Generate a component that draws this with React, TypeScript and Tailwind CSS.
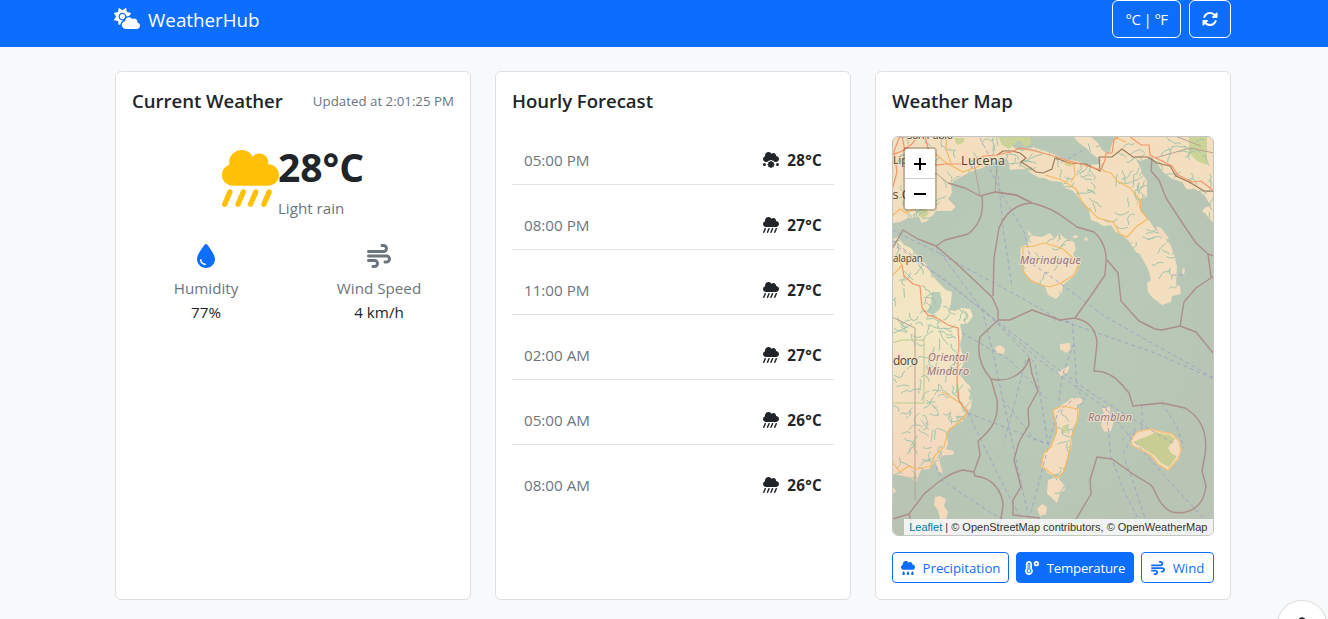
import React from "react";
import {
  FaCloudSun,
  FaRotate,
  FaCloudShowersHeavy,
  FaDroplet,
  FaWind,
  FaCloudMeatball,
  FaCloudRain,
  FaTemperatureHigh,
} from "react-icons/fa6";

const HOURS = [
  { time: "05:00 PM", temp: "28°C", meatball: true },
  { time: "08:00 PM", temp: "27°C", meatball: false },
  { time: "11:00 PM", temp: "27°C", meatball: false },
  { time: "02:00 AM", temp: "27°C", meatball: false },
  { time: "05:00 AM", temp: "26°C", meatball: false },
  { time: "08:00 AM", temp: "26°C", meatball: false },
];

const LUZON =
  "M892 136H1003L1008 143L1016 149L1023 151L1033 147L1045 151L1056 155L1064 159L1076 161L1090 165L1099 164L1101 160L1092 154L1087 149L1078 142L1073 136H1090L1098 143L1102 150L1109 154L1112 144L1117 136H1214V224L1209 219L1206 214L1202 211L1206 207L1211 206L1205 196L1195 189L1187 190L1182 182L1172 179L1162 171L1157 163L1151 157L1141 161L1136 159L1140 167L1142 173L1147 181L1147 197L1140 199L1139 208L1148 219L1155 229L1162 236L1170 244L1175 257L1177 267L1176 284L1180 286L1181 294L1172 296L1171 302L1162 305L1153 298L1148 292L1147 283L1151 280L1148 269L1142 258L1136 252L1128 240L1123 236L1115 231L1111 225L1103 226L1097 222L1091 220L1089 211L1085 204L1080 199L1073 191L1065 188L1062 182L1050 181L1045 178L1040 178L1034 175L1026 170L1018 169L1010 170L1008 160L1003 157L994 162L982 168L970 172L957 179L951 184L952 193L948 199L956 207L951 211L936 211L933 215L927 221L922 223L918 217L908 218L900 222L892 223Z";
const MINDORO =
  "M892 240L898 237L904 245L911 248L919 258L926 264L931 274L937 281L946 290L952 292L951 303L949 310L955 311L962 308L970 309L973 316L967 324L960 324L962 335L960 345L962 352L964 362L959 374L965 381L970 386L972 398L971 407L968 413L963 421L956 425L949 429L947 436L948 444L946 449L954 451L953 455L945 455L939 459L941 467L943 473L939 472L935 461L929 469L921 470L916 482L909 477L892 474Z";
const MARINDUQUE =
  "M1028 230L1033 236L1042 237L1050 233L1054 238L1059 233L1066 239L1074 242L1076 249L1073 254L1080 265L1075 275L1063 285L1062 293L1056 299L1048 295L1045 286L1033 281L1025 274L1022 262L1020 258L1021 247L1028 244L1029 238Z";
const TABLAS =
  "M1053 411L1060 406L1070 400L1075 398L1082 399V403L1076 405L1079 410L1078 418L1072 430L1072 444L1068 457L1064 470L1059 479L1064 485L1065 490L1060 493L1057 503L1051 497L1047 494L1048 480L1056 477L1047 473L1041 466L1042 456L1050 447L1056 434L1057 423Z";
const SIBUYAN =
  "M1131 440L1137 432L1150 429L1162 432L1172 434L1179 441L1181 450L1178 459L1168 470L1158 464L1151 455L1141 450L1132 445Z";

const MINOR_ISLANDS = [
  "M1102 420L1104 413L1102 408L1110 407L1110 416L1114 421L1111 431L1105 432L1101 426Z",
  "M995 347L1000 345L1005 349L1004 354L997 353Z",
  "M1060 344L1070 343L1070 350L1066 353L1060 349Z",
  "M1057 373L1063 369L1070 366L1067 373L1060 376Z",
  "M1066 403L1071 398L1080 398L1082 402L1074 405L1067 407Z",
  "M935 497L940 496L946 499L944 506L948 512L946 519L940 519L938 510L934 505Z",
  "M1037 509L1042 504L1047 507L1046 514L1040 516Z",
  "M892 486L896 491L892 495Z",
  "M1156 226L1161 228L1169 238L1166 240L1158 232Z",
  "M1073 236L1077 235L1078 238L1073 238Z",
  "M1085 237L1088 238L1087 241L1084 240Z",
  "M1183 268L1185 269L1184 275L1182 273Z",
];

const BOUNDARIES = [
  "M948 183L965 188L980 196L995 192L1016 195L1032 203C1045 206 1057 212 1066 219L1077 227L1094 232C1103 240 1107 252 1106 262L1105 275L1090 297L1075 318L1060 320L1032 310L1010 320L998 320",
  "M995 192L1016 195L1030 202",
  "M982 196C984 212 980 225 968 234L953 238L945 240L936 246L918 239L903 230L892 249",
  "M936 246L957 264L992 297L998 310",
  "M1032 203C1016 204 1005 213 999 228L994 258L993 296",
  "M998 310V320L980 337C976 356 983 370 991 379C1008 383 1025 374 1029 358L1032 374L1038 391L1028 409L1029 425L1019 442L1014 460L1021 487L1013 500V515L1040 518",
  "M991 379L997 400C999 420 991 430 978 441L980 455L974 472L963 470C948 473 936 484 924 494L909 514L892 519",
  "M974 472L975 476C993 477 1003 493 1003 506L998 536M909 514L915 536",
  "M1107 260L1118 273L1121 301L1139 321L1155 329L1162 330L1180 326L1184 302L1196 288L1211 278L1214 276",
  "M1075 318C1087 321 1096 327 1097 343L1094 371C1113 371 1121 384 1129 393L1133 406L1162 403L1185 408C1202 418 1208 434 1205 455L1202 471L1206 486C1204 508 1188 515 1172 512C1158 506 1156 490 1151 485L1133 474L1112 459L1097 457L1090 480L1091 494L1075 521",
  "M1152 158L1151 171L1159 180L1166 198L1183 224L1196 243L1208 254L1211 277M1208 254L1214 256",
  "M1180 326L1196 332L1214 354",
];
const THIN_BOUNDARIES = [
  "M902 166L937 174L948 183M980 195L974 164M995 192L997 165M915 500L915 328L892 317",
  "M1155 158L1190 148L1214 153M1175 136L1201 146",
];

const FERRIES = [
  "M980 138L998 173L1003 228L1012 286",
  "M990 169L1001 193L1024 232L1032 264L1053 278L1104 316L1214 378",
  "M892 230L933 250L1018 296L1060 320L1155 353L1214 379",
  "M892 240L1011 332L1055 367L1094 395L1162 437L1175 444",
  "M936 247L982 309L993 353L1003 400L1024 496L1032 535",
  "M982 309L1038 359L1105 408L1163 474L1214 530",
  "M962 333L1010 360L1049 401M968 413L1048 444L1058 412L1075 398",
  "M968 413L1003 485L1031 536M936 466L942 480L991 513L1035 536",
  "M1003 400L1035 440L1049 444L1030 516",
  "M1059 401L1062 376L1074 343L1072 322L1054 320",
  "M1106 407L1111 457L1125 493L1147 536M1125 460L1131 476L1151 536",
  "M1074 343L1077 390L1085 400L1074 411M1142 405V432M1122 440L1136 429L1122 456",
  "M1061 163L1086 148M1172 275H1183M1026 360L1004 442M1162 403L1177 427L1184 448",
  "M892 243L945 280L990 316L1035 363L1048 444",
];

const HIGHWAYS = [
  "M892 155L902 151L912 144L918 136M892 190L897 172L894 151L900 136M902 136L905 151M925 136L930 156L936 165L945 164L963 164",
  "M969 162L984 156L996 155L1011 152L1020 148L1035 151L1050 155L1066 160L1084 165L1101 170L1105 160L1106 153L1112 153L1114 140L1119 136",
  "M1129 136L1141 145L1149 145L1150 155L1162 161L1172 166L1178 175L1192 182L1201 181L1214 191",
  "M902 265L904 276L913 284L920 286L922 308L928 315L937 318L948 325L958 328L959 344L957 381L959 401L968 413",
];
const ROADS = [
  "M892 164L909 158L914 161L936 154L945 162L963 172L977 167L990 161",
  "M892 216L900 209L906 213L914 209L924 207L933 203M947 136L946 149L951 163",
  "M1045 175L1062 180L1076 189L1083 204L1091 211L1098 218L1113 222L1120 234L1127 237L1137 226L1148 219L1141 211L1140 200L1130 188L1117 181L1111 173L1103 171",
  "M1065 162L1074 165L1075 175L1071 182M1114 137L1126 142",
  "M892 263L898 259L902 265L893 275",
  "M892 462L900 472L909 466L917 469L931 466L935 455L944 447L948 431L960 421L968 412L960 403L948 395L942 392",
  "M1023 247L1034 246L1044 243L1055 246L1063 249L1072 257L1079 264L1074 275L1061 283L1050 287L1041 285L1030 280L1023 271Z",
  "M1053 410L1062 406L1078 409L1077 422L1072 436L1069 453L1064 471L1058 478L1049 472L1041 465L1044 453L1051 447L1057 431L1054 418Z",
];

/* Deterministic generator so that the streams stay the same on every render. */
function makeStreams(): string {
  let seed = 7231;
  const rnd = () => {
    seed = (seed * 1103515245 + 12345) % 2147483648;
    return seed / 2147483648;
  };
  let d = "";
  for (let i = 0; i < 760; i++) {
    let x = 892 + rnd() * 322;
    let y = 136 + rnd() * 358;
    let a = rnd() * 6.28;
    d += `M${x.toFixed(1)} ${y.toFixed(1)}`;
    const steps = 3 + Math.floor(rnd() * 3);
    for (let k = 0; k < steps; k++) {
      a += (rnd() - 0.5) * 1.9;
      x += Math.cos(a) * 3.2;
      y += Math.sin(a) * 3.2;
      d += `L${x.toFixed(1)} ${y.toFixed(1)}`;
    }
  }
  return d;
}
const STREAMS = makeStreams();

function MapArt() {
  return (
    <svg viewBox="893 137 320 398" className="absolute inset-0 h-full w-full" fontFamily='"Open Sans", "Noto Sans", sans-serif'>
      <defs>
        <clipPath id="land">
          <path d={LUZON} />
          <path d={MINDORO} />
          <path d={MARINDUQUE} />
          <path d={TABLAS} />
        </clipPath>
        <linearGradient id="mindoro" x1="0" y1="0" x2="0" y2="1">
          <stop offset="0" stopColor="#f3e2c0" />
          <stop offset="0.4" stopColor="#f3e7c4" />
          <stop offset="0.68" stopColor="#f4dfc1" />
          <stop offset="1" stopColor="#f4d5bc" />
        </linearGradient>
        <radialGradient id="haze" cx="0.42" cy="0.42" r="0.65">
          <stop offset="0" stopColor="#bacbb8" />
          <stop offset="0.7" stopColor="#b8c7b6" />
          <stop offset="1" stopColor="#b8c4b4" />
        </radialGradient>
      </defs>
      <rect x="892" y="136" width="322" height="400" fill="url(#haze)" />
      <path d={LUZON} fill="#f3dfbf" />
      <path d={MINDORO} fill="url(#mindoro)" />
      <path d={MARINDUQUE} fill="#f3debf" />
      <path d={TABLAS} fill="#f3dcc0" />
      {MINOR_ISLANDS.map((d) => (
        <path key={d} d={d} fill="#f3dabd" />
      ))}
      <path d={SIBUYAN} fill="#f3dcc0" stroke="#f7c27c" strokeWidth="1.4" />
      <path d="M1134 442L1140 439L1148 436L1156 432L1163 434L1170 435L1175 439L1168 448L1172 454L1177 456L1169 467L1161 463L1154 455L1144 449Z" fill="#c8ce92" />
      <g fill="#cbd398">
        <path d="M1189 136H1207V165L1197 161L1189 153Z" />
        <path d="M954 138H965L963 143L957 145Z" />
        <path d="M998 136H1030L1031 144L1025 147L1019 140L1009 149L1002 145Z" />
        <path d="M918 211L926 207L929 214L922 219Z" />
        <path d="M1064 161L1071 163L1071 167L1065 165Z" />
        <path d="M1063 426L1068 424L1066 433L1061 433Z" />
      </g>
      <path d="M932 292L940 292L942 301L940 309L933 315L927 312L931 303Z" fill="#b9cbb9" />
      <g clipPath="url(#land)">
        <path d={STREAMS} fill="none" stroke="#9cc2ad" strokeWidth="0.95" />
        <path d="M892 343L902 340H924V403H892" fill="none" stroke="#bccb8c" strokeWidth="1" />
      </g>
      <g fill="none" stroke="#9c9dc8" strokeWidth="0.9" strokeDasharray="4 3" opacity="0.9">
        {FERRIES.map((d) => (
          <path key={d} d={d} />
        ))}
      </g>
      <g fill="none" stroke="#ac8e8a" strokeWidth="1.4" strokeLinejoin="round">
        {BOUNDARIES.map((d) => (
          <path key={d} d={d} />
        ))}
      </g>
      <g fill="none" stroke="#b39a90" strokeWidth="0.9">
        {THIN_BOUNDARIES.map((d) => (
          <path key={d} d={d} />
        ))}
      </g>
      <path d="M997 155L1003 151L1012 151L1020 153L1026 158L1021 162L1026 165L1036 172L1043 173L1052 169L1055 158L1070 163L1086 164L1100 171L1099 157L1112 157L1122 149L1133 157L1148 157L1157 163L1170 166L1176 176L1191 183L1204 191L1214 191" fill="none" stroke="#9b7657" strokeWidth="1.1" />
      <g fill="none" stroke="#f6b960" strokeWidth="1.15">
        {ROADS.map((d) => (
          <path key={d} d={d} />
        ))}
      </g>
      <g fill="none" stroke="#f49467" strokeWidth="1.2">
        {HIGHWAYS.map((d) => (
          <path key={d} d={d} />
        ))}
      </g>
      <g fill="#4a4235" stroke="#f3e4c9" strokeWidth="2" strokeOpacity="0.75" paintOrder="stroke" strokeLinejoin="round">
        <text x="907" y="139" fontSize="10.5" textLength="46">San Pablo</text>
        <text x="893" y="164" fontSize="10.5">Lipa</text>
        <text x="961" y="165" fontSize="12.5" textLength="44">Lucena</text>
        <text x="892.5" y="199" fontSize="12.5">s City</text>
        <text x="893" y="262" fontSize="10" textLength="30">alapan</text>
        <text x="893" y="365" fontSize="12" textLength="25">doro</text>
      </g>
      <g fill="#936b70" stroke="#f3e4d4" strokeWidth="2" strokeOpacity="0.8" paintOrder="stroke" strokeLinejoin="round" fontStyle="italic" fontSize="10.8">
        <text x="1020" y="264" textLength="61">Marinduque</text>
        <text x="928" y="361" textLength="40">Oriental</text>
        <text x="927" y="374.5" textLength="42">Mindoro</text>
        <text x="1088" y="421" textLength="44">Romblon</text>
      </g>
    </svg>
  );
}

function Card({ children }: { children: React.ReactNode }) {
  return <section className="flex h-[529px] w-[356px] flex-col rounded-md border border-[#dedfe0] bg-white p-4">{children}</section>;
}

function Title({ children }: { children: React.ReactNode }) {
  return <h2 className="text-[18.6px] leading-6 font-semibold tracking-[-0.04px] whitespace-nowrap">{children}</h2>;
}

export default function App() {
  return (
    <div className="relative h-[619px] overflow-hidden bg-[#f8f9fa] font-['Open_Sans','Noto_Sans',sans-serif] text-[15.2px] leading-6 text-[#212529]">
      <nav className="flex h-[47px] items-start justify-between bg-[#0d6efd] pr-[97px] pl-[114px] text-white">
        <div className="flex items-start gap-2">
          <FaCloudSun className="mt-[8px] h-[21px] w-[26px]" />
          <span className="pt-[5px] text-[18.8px] leading-[30px]">WeatherHub</span>
        </div>
        <div className="flex gap-2">
          <button className="h-[38px] w-[69px] rounded-md border border-white text-[15px] tracking-[-0.6px] whitespace-nowrap">°C | °F</button>
          <button className="flex h-[38px] w-[42px] items-center justify-center rounded-md border border-white">
            <FaRotate className="size-4" />
          </button>
        </div>
      </nav>

      <main className="flex gap-6 pt-6 pl-[115px]">
        <Card>
          <div className="flex items-center justify-between pt-px">
            <Title>Current Weather</Title>
            <span className="text-[13.3px] text-[#6c757d]">Updated at 2:01:25 PM</span>
          </div>
          <div className="flex justify-center pt-[30px]">
            <FaCloudShowersHeavy className="mt-[7px] size-[57px] text-[#ffc107]" />
            <div className="-ml-px">
              <div className="text-[39px] leading-[48px] font-bold">28°C</div>
              <div className="mt-[5px] text-[#6c757d]">Light rain</div>
            </div>
          </div>
          <div className="mt-[24px] grid grid-cols-2 text-center">
            <div className="flex flex-col items-center pr-[13px]">
              <FaDroplet className="size-6 text-[#0d6efd]" />
              <div className="mt-[8px] text-[#6c757d]">Humidity</div>
              <div>77%</div>
            </div>
            <div className="flex flex-col items-center pl-[11px]">
              <FaWind className="size-6 text-[#6c757d]" />
              <div className="mt-[8px] text-[#6c757d]">Wind Speed</div>
              <div>4 km/h</div>
            </div>
          </div>
        </Card>

        <Card>
          <div className="pt-px">
            <Title>Hourly Forecast</Title>
          </div>
          <ul className="mt-[7px]">
            {HOURS.map((h) => (
              <li key={h.time} className="flex h-[65px] items-center justify-between border-b border-[#dee2e6] px-3 pt-[16px] last:border-transparent">
                <span className="text-[#6c757d]">{h.time}</span>
                <span className="flex items-center gap-2 font-bold">
                  {h.meatball ? <FaCloudMeatball className="size-4" /> : <FaCloudShowersHeavy className="size-4" />}
                  <span className="tracking-[0.3px]">{h.temp}</span>
                </span>
              </li>
            ))}
          </ul>
        </Card>

        <Card>
          <div className="pt-px">
            <Title>Weather Map</Title>
          </div>
          <div className="relative mt-[23px] h-[400px] w-[322px] shrink-0 overflow-hidden rounded-md border border-[#c3c6c3]">
            <MapArt />
            <div className="absolute top-[10px] left-[10px] rounded-[4px] border-2 border-black/20 bg-clip-padding">
              <div className="flex h-[30px] w-[30px] items-center justify-center rounded-t-[2px] border-b border-[#ccc] bg-white">
                <svg viewBox="0 0 12 12" className="size-3"><path d="M6 0V12M0 6H12" stroke="#000" strokeWidth="2" /></svg>
              </div>
              <div className="flex h-[30px] w-[30px] items-center justify-center rounded-b-[2px] bg-white">
                <svg viewBox="0 0 12 12" className="size-3"><path d="M0 6H12" stroke="#000" strokeWidth="2" /></svg>
              </div>
            </div>
            <div className="absolute right-0 bottom-0 bg-white/80 px-[5.5px] font-['Liberation_Sans',sans-serif] text-[11px] leading-[16px] whitespace-nowrap text-[#333]">
              <span className="text-[#0078a8]">Leaflet</span> | © OpenStreetMap contributors, © OpenWeatherMap
            </div>
          </div>
          <div className="mt-4 flex justify-between text-[13.2px] leading-5">
            <button className="flex h-[31px] w-[117px] items-center justify-center gap-[8px] rounded-[4px] border border-[#0d6efd] text-[#0d6efd]">
              <FaCloudRain className="size-[14px]" />
              Precipitation
            </button>
            <button className="flex h-[31px] w-[118px] items-center justify-center gap-[8px] rounded-[4px] border border-[#0d6efd] bg-[#0d6efd] text-white">
              <FaTemperatureHigh className="size-[14px]" />
              <span className="tracking-[-0.2px]">Temperature</span>
            </button>
            <button className="flex h-[31px] w-[73px] items-center justify-center gap-[8px] rounded-[4px] border border-[#0d6efd] text-[#0d6efd]">
              <FaWind className="size-[14px]" />
              Wind
            </button>
          </div>
        </Card>
      </main>

      <div className="absolute top-[600px] left-[1277px] flex size-[50px] justify-center rounded-full border border-[#dedfe0] bg-white pt-[16px] shadow-sm">
        <svg viewBox="0 0 8 8" className="size-2"><path d="M1 3C2 0.5 6 0.5 7 3" fill="none" stroke="#212529" strokeWidth="1.6" /></svg>
      </div>
    </div>
  );
}
